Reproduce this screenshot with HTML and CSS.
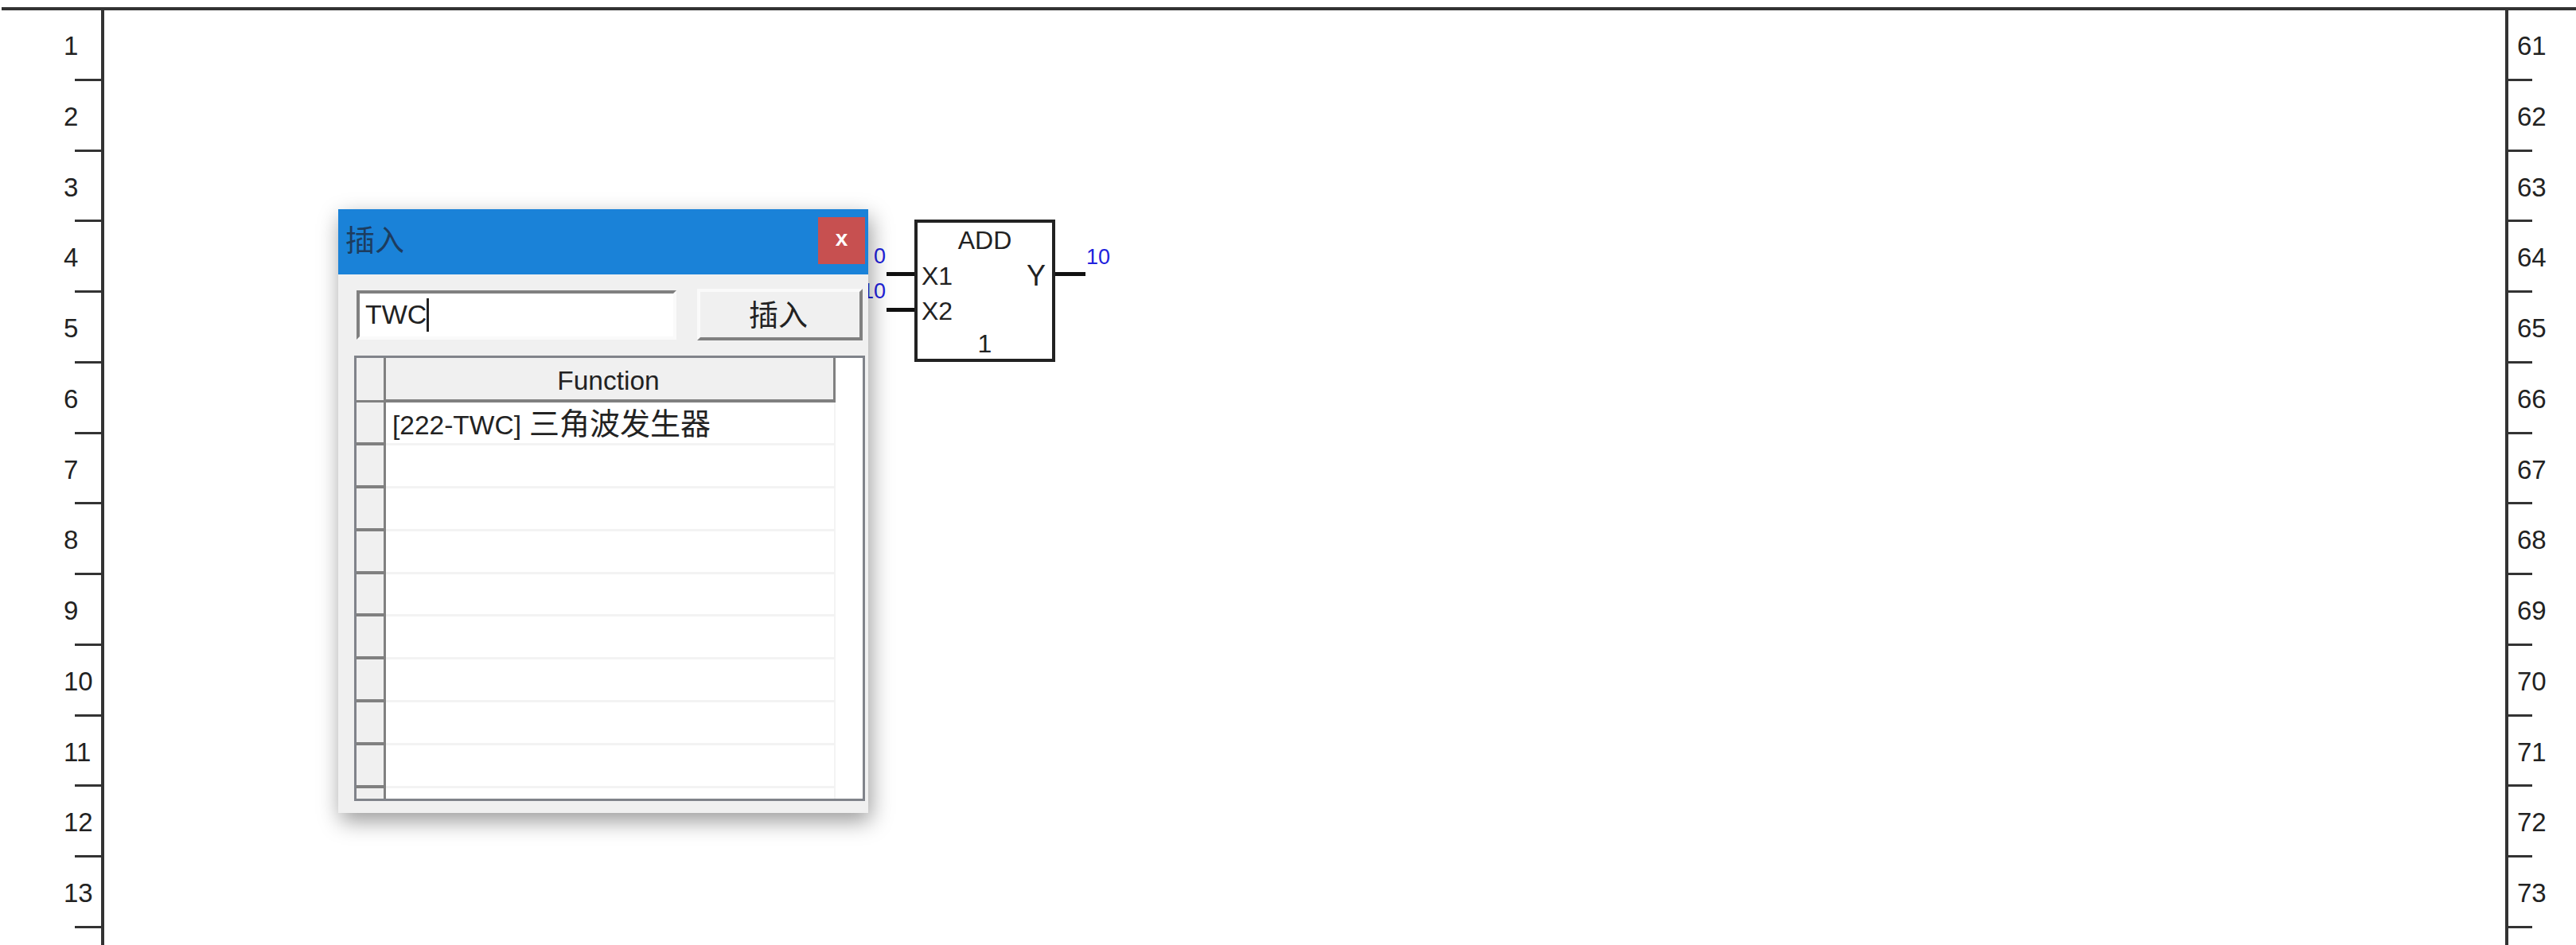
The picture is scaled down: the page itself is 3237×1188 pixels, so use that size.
FILE: index.html
```html
<!DOCTYPE html>
<html lang="zh">
<head>
    <meta charset="UTF-8">
    <title>插入</title>
    <link rel="stylesheet" href="styles.css">
</head>
<body>
    <div class="sheet">
        <div class="gutter gutter-left">
            <div class="line"><span class="num">1</span><i class="tick"></i></div>
            <div class="line"><span class="num">2</span><i class="tick"></i></div>
            <div class="line"><span class="num">3</span><i class="tick"></i></div>
            <div class="line"><span class="num">4</span><i class="tick"></i></div>
            <div class="line"><span class="num">5</span><i class="tick"></i></div>
            <div class="line"><span class="num">6</span><i class="tick"></i></div>
            <div class="line"><span class="num">7</span><i class="tick"></i></div>
            <div class="line"><span class="num">8</span><i class="tick"></i></div>
            <div class="line"><span class="num">9</span><i class="tick"></i></div>
            <div class="line"><span class="num">10</span><i class="tick"></i></div>
            <div class="line"><span class="num">11</span><i class="tick"></i></div>
            <div class="line"><span class="num">12</span><i class="tick"></i></div>
            <div class="line"><span class="num">13</span><i class="tick"></i></div>
        </div>

        <div class="canvas">
            <!-- function block -->
            <div class="block">
                <span class="block-name">ADD</span>
                <span class="port port-x1">X1</span>
                <span class="port port-x2">X2</span>
                <span class="port port-y">Y</span>
                <span class="block-order">1</span>
                <i class="pin pin-x1"></i>
                <i class="pin pin-x2"></i>
                <i class="pin pin-y"></i>
                <span class="value value-x1">0</span>
                <span class="value value-x2">10</span>
                <span class="value value-y">10</span>
            </div>

            <!-- insert dialog -->
            <div class="dialog">
                <div class="titlebar">
                    <span class="title">插入</span>
                    <button class="close">x</button>
                </div>
                <div class="toolbar">
                    <div class="search"><span>TWC</span><i class="caret"></i></div>
                    <button class="insert">插入</button>
                </div>
                <div class="grid">
                    <div class="grid-row grid-head">
                        <div class="row-head"></div>
                        <div class="cell">Function</div>
                    </div>
                    <div class="grid-row">
                        <div class="row-head"></div>
                        <div class="cell">[222-TWC]<span class="cjk">三角波发生器</span></div>
                    </div>
                    <div class="grid-row"><div class="row-head"></div><div class="cell"></div></div>
                    <div class="grid-row"><div class="row-head"></div><div class="cell"></div></div>
                    <div class="grid-row"><div class="row-head"></div><div class="cell"></div></div>
                    <div class="grid-row"><div class="row-head"></div><div class="cell"></div></div>
                    <div class="grid-row"><div class="row-head"></div><div class="cell"></div></div>
                    <div class="grid-row"><div class="row-head"></div><div class="cell"></div></div>
                    <div class="grid-row"><div class="row-head"></div><div class="cell"></div></div>
                    <div class="grid-row"><div class="row-head"></div><div class="cell"></div></div>
                    <div class="grid-row"><div class="row-head"></div><div class="cell"></div></div>
                </div>
            </div>
        </div>

        <div class="gutter gutter-right">
            <div class="line"><i class="tick"></i><span class="num">61</span></div>
            <div class="line"><i class="tick"></i><span class="num">62</span></div>
            <div class="line"><i class="tick"></i><span class="num">63</span></div>
            <div class="line"><i class="tick"></i><span class="num">64</span></div>
            <div class="line"><i class="tick"></i><span class="num">65</span></div>
            <div class="line"><i class="tick"></i><span class="num">66</span></div>
            <div class="line"><i class="tick"></i><span class="num">67</span></div>
            <div class="line"><i class="tick"></i><span class="num">68</span></div>
            <div class="line"><i class="tick"></i><span class="num">69</span></div>
            <div class="line"><i class="tick"></i><span class="num">70</span></div>
            <div class="line"><i class="tick"></i><span class="num">71</span></div>
            <div class="line"><i class="tick"></i><span class="num">72</span></div>
            <div class="line"><i class="tick"></i><span class="num">73</span></div>
        </div>
    </div>
</body>
</html>
```

FILE: styles.css
```css
html, body {
    margin: 0;
    height: 100%;
    overflow: hidden;
    background-color: white;
}
body {
    font-family: "Liberation Sans", "Noto Sans CJK SC", sans-serif;
    font-size: 33px;
    color: #222;
}
.sheet {
    display: flex;
    box-sizing: border-box;
    height: 1188px;
    margin: 9px 0 0 2px;
    border-top: 4px solid #333;
}

/* line numbers */
.gutter {
    flex: none;
    width: 125px;
    border-right: 4px solid #333;
}
.gutter-right {
    width: 85px;
    border-right: none;
    border-left: 4px solid #333;
}
.line {
    position: relative;
    box-sizing: border-box;
    height: 88.77px;
    padding-top: 26px;
    line-height: 38px;
}
.gutter-left .line {
    padding-left: 78px;
}
.gutter-right .line {
    padding-left: 11px;
}
.tick {
    position: absolute;
    bottom: 0;
    width: 33px;
    height: 3px;
    background-color: #333;
}
.gutter-left .tick {
    right: 0;
}
.gutter-right .tick {
    left: 0;
    width: 30px;
}

.canvas {
    position: relative;
    flex: 1;
}

/* function block */
.block {
    position: absolute;
    left: 1018px;
    top: 263px;
    box-sizing: border-box;
    width: 177px;
    height: 179px;
    border: 4px solid #222;
}
.block span {
    position: absolute;
    line-height: 36px;
    font-size: 32px;
}
.block-name {
    left: 0;
    right: 0;
    top: 4px;
    text-align: center;
}
.block-order {
    left: 0;
    right: 0;
    top: 134px;
    text-align: center;
}
.port-x1 {
    left: 5px;
    top: 49px;
}
.port-x2 {
    left: 5px;
    top: 93px;
}
.block .port-y {
    right: 8px;
    top: 49px;
    font-size: 36px;
}
.pin {
    position: absolute;
    height: 5px;
    background-color: #111;
}
.pin-x1, .pin-x2 {
    left: -39px;
    width: 35px;
}
.pin-x1 {
    top: 62px;
}
.pin-x2 {
    top: 107px;
}
.pin-y {
    left: 173px;
    top: 62px;
    width: 38px;
}
.block .value {
    font-size: 27px;
    line-height: 30px;
    color: #2222dd;
}
.block .value-x1 {
    right: 209px;
    top: 27px;
}
.block .value-x2 {
    right: 209px;
    top: 71px;
}
.block .value-y {
    left: 212px;
    top: 28px;
}

/* insert dialog */
.dialog {
    position: absolute;
    left: 294px;
    top: 250px;
    z-index: 2;
    display: flex;
    flex-direction: column;
    box-sizing: border-box;
    width: 666px;
    height: 759px;
    background-color: #f0f0f0;
    box-shadow: 3px 10px 26px rgba(0,0,0,0.4);
}
.titlebar {
    display: flex;
    align-items: flex-start;
    justify-content: space-between;
    box-sizing: border-box;
    height: 82px;
    padding: 10px 4px 0 9px;
    background-color: #1a82d8;
}
.title {
    font-size: 37px;
    line-height: 62px;
    color: #1d3c5e;
}
.close {
    width: 59px;
    height: 59px;
    padding: 0 0 6px;
    border: none;
    background-color: #c75050;
    font-family: inherit;
    font-size: 28px;
    font-weight: bold;
    color: white;
}
.toolbar {
    display: flex;
    align-items: center;
    gap: 26px;
    margin: 18px 0 0 23px;
}
.search {
    display: flex;
    align-items: center;
    box-sizing: border-box;
    width: 402px;
    height: 62px;
    padding-left: 7px;
    border: 4px solid #fafafa;
    border-top-color: #808080;
    border-left-color: #808080;
    background-color: white;
    font-size: 34px;
}
.caret {
    width: 3px;
    height: 42px;
    background-color: #222;
}
.insert {
    box-sizing: border-box;
    width: 208px;
    height: 65px;
    padding: 0 4px 6px 0;
    border: 4px solid #808080;
    border-top-color: #fafafa;
    border-left-color: #fafafa;
    background-color: #f0f0f0;
    font-family: "Noto Sans CJK SC", sans-serif;
    font-size: 37px;
    color: #222;
}

/* function list */
.grid {
    box-sizing: border-box;
    width: 642px;
    height: 560px;
    margin: 19px 0 0 20px;
    border: 3px solid #80838a;
    background-color: white;
    overflow: hidden;
}
.grid-row {
    display: flex;
    height: 53.9px;
}
.grid-head {
    height: 56px;
}
.row-head {
    flex: none;
    box-sizing: border-box;
    width: 37px;
    border-right: 3px solid #808080;
    border-bottom: 4px solid #808080;
    background-color: #f0f0f0;
}
.cell {
    box-sizing: border-box;
    width: 565px;
    padding-left: 8px;
    border-right: 2px solid #f3f3f3;
    border-bottom: 3px solid #f3f3f3;
    line-height: 54px;
    font-size: 33.5px;
    white-space: nowrap;
}
.grid-head .row-head {
    border-bottom-width: 3px;
}
.grid-head .cell {
    padding-right: 3px;
    padding-left: 0;
    padding-top: 2px;
    border-right: 3px solid #808080;
    border-bottom: 4px solid #808080;
    background-color: #f0f0f0;
    text-align: center;
}
.cjk {
    margin-left: 10px;
    font-size: 38px;
}
```
